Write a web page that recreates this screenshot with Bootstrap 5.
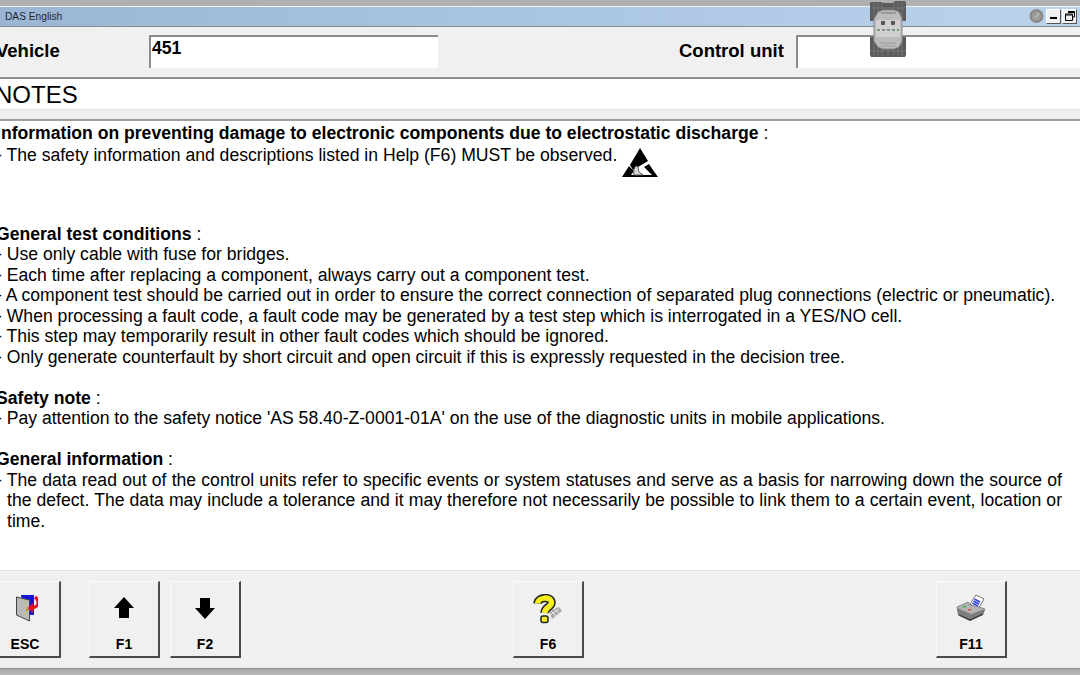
<!DOCTYPE html>
<html lang="en">
<head>
<meta charset="utf-8">
<title>DAS English</title>
<link href="https://cdn.jsdelivr.net/npm/bootstrap@5.3.0/dist/css/bootstrap.min.css" rel="stylesheet">
<style>
html,body{height:675px;overflow:hidden;background:#fff}
body{font-family:"Liberation Sans",Arial,sans-serif;color:#000}
.das-shell{width:1080px;height:675px;overflow:hidden;position:relative}
.das-top{height:7px;background:#b0b0b0;border-bottom:1px solid #f2f2f2}
.das-title{height:20px;background:linear-gradient(90deg,#9bb6d4,#bad4ee);border-bottom:1px solid #8a8a8a;font-size:10.2px;color:#1c2530;padding-left:5px}
.das-head{height:52px;background:#f0f0f0;border-bottom:2px solid #8c8c8c;padding-top:8px}
.das-label{font-size:18.5px;font-weight:700;line-height:20px;white-space:nowrap;flex:none;padding-top:6px}
.das-veh{width:149px;margin-left:-4px;margin-right:4px}
.das-ctl{margin-left:241px}
.das-field{background:#fff;border-top:2px solid #8c8c8c;border-left:2px solid #8c8c8c;height:33px;font-size:17.6px;font-weight:700;line-height:20px;padding:1px 0 0 1px;flex:none}
.das-field-a{width:289px}
.das-field-b{width:300px;margin-left:12px}
.das-notes{height:31px;background:#fff;border-bottom:1px solid #e3e3e3;font-size:24px;line-height:31px;white-space:nowrap}
.das-notes span{display:block;margin-left:-5px}
.das-strip{height:11px;background:#f0f0f0;border-bottom:2px solid #a0a0a0}
.das-body{height:449px;font-size:17.6px;line-height:20.5px;overflow:hidden;padding-top:2px}
.das-body p{margin:0 0 0 -4px;width:1066px}
.das-line{height:20.5px;white-space:nowrap}
.das-esd-line{height:22px;padding-top:1px;white-space:nowrap}
.das-just{text-align:justify;padding-left:11px;text-indent:-11px}
.das-gap-a{height:58px}
.das-gap-b{height:20.5px}
.das-esd{position:relative;margin-left:5px;vertical-align:-17px}
.das-foot{height:98px;background:#f0f0f0;border-top:1px solid #e2e2e2;padding-top:10px}
.das-key{width:71px;height:77px;background:#f0f0f0;border:0;border-top:1px solid #fbfbfb;border-left:1px solid #fbfbfb;border-right:2px solid #4a4a4a;border-bottom:2px solid #4a4a4a;border-radius:0;padding:0;font-size:14px;font-weight:700;color:#000;flex:none;display:flex;flex-direction:column;align-items:center}
.das-key svg{margin-top:12px;height:30px;flex:none}
.das-key span{margin-top:12px;line-height:16px}
.das-k-esc{margin-left:-10px}
.das-k-f1{margin-left:28px}
.das-k-f2{margin-left:10px}
.das-k-f6{margin-left:272px}
.das-k-f11{margin-left:352px}
.das-bottom{height:7px;background:linear-gradient(180deg,#a8a8a8,#bcbcbc);border-top:1px solid #8f8f8f}
.das-device{position:absolute;left:869px;top:1px}
.das-winbtn{width:15px;height:15px;background:#f0f0f0;border:1px solid #9a9a9a;border-top-color:#fff;border-left-color:#fff;border-right-color:#555;border-bottom-color:#555;margin-left:1px;flex:none}
.das-winctl{position:absolute;left:1029px;top:8px}
</style>
</head>
<body>
<div class="das-shell">
  <div class="das-top"></div>
  <div class="das-title d-flex align-items-center">DAS English</div>
  <div class="das-head d-flex align-items-start">
    <div class="das-label das-veh">Vehicle</div>
    <div class="das-field das-field-a">451</div>
    <div class="das-label das-ctl">Control unit</div>
    <div class="das-field das-field-b"></div>
  </div>
  <div class="das-notes"><span>NOTES</span></div>
  <div class="das-strip"></div>
  <div class="das-body">
    <p class="das-line"><b>Information on preventing damage to electronic components due to electrostatic discharge</b> :</p>
    <p class="das-esd-line">- The safety information and descriptions listed in Help (F6) MUST be observed.<svg class="das-esd" width="36" height="30" viewBox="0 0 36 30"><path d="M18 0 L26 13 L11 22 L8 17 Z" fill="#000"/><path d="M7 18 L0 29 H36 L31 22 L27 16 L22 19 L30 27 H9 L12 23 Z" fill="#000"/><path d="M12 27 C11 21 13 18 15 18 C17 19 16 22 17 24 L21 27 Z" fill="#d8d8d8" stroke="#555" stroke-width="1"/></svg></p>
    <div class="das-gap-a"></div>
    <p class="das-line"><b>General test conditions</b> :</p>
    <p class="das-line">- Use only cable with fuse for bridges.</p>
    <p class="das-line">- Each time after replacing a component, always carry out a component test.</p>
    <p class="das-line">- A component test should be carried out in order to ensure the correct connection of separated plug connections (electric or pneumatic).</p>
    <p class="das-line">- When processing a fault code, a fault code may be generated by a test step which is interrogated in a YES/NO cell.</p>
    <p class="das-line">- This step may temporarily result in other fault codes which should be ignored.</p>
    <p class="das-line">- Only generate counterfault by short circuit and open circuit if this is expressly requested in the decision tree.</p>
    <div class="das-gap-b"></div>
    <p class="das-line"><b>Safety note</b> :</p>
    <p class="das-line">- Pay attention to the safety notice 'AS 58.40-Z-0001-01A' on the use of the diagnostic units in mobile applications.</p>
    <div class="das-gap-b"></div>
    <p class="das-line"><b>General information</b> :</p>
    <p class="das-just">- The data read out of the control units refer to specific events or system statuses and serve as a basis for narrowing down the source of the defect. The data may include a tolerance and it may therefore not necessarily be possible to link them to a certain event, location or time.</p>
  </div>
  <div class="das-foot d-flex align-items-start">
    <button type="button" class="btn das-key das-k-esc"><svg width="26" height="30" viewBox="0 0 26 30"><path d="M9 1 H22 V21 H12 Z" fill="#1414d8"/><path d="M4.5 3 L17.5 6 V27 L4.5 21 Z" fill="#b9b9b9" stroke="#444" stroke-width="1"/><rect x="14" y="15" width="2" height="2" fill="#b89000"/><path d="M23 3 C28 7 27 13 20 14" fill="none" stroke="#e80f16" stroke-width="3"/><path d="M21 9 L21 19 L15.5 14 Z" fill="#e80f16"/></svg><span>ESC</span></button>
    <button type="button" class="btn das-key das-k-f1"><svg width="22" height="30" viewBox="0 0 22 30"><path d="M11 3 L21 14 H16 V24 H6 V14 H1 Z" fill="#000"/></svg><span>F1</span></button>
    <button type="button" class="btn das-key das-k-f2"><svg width="22" height="30" viewBox="0 0 22 30"><path d="M6 4 H16 V14 H21 L11 25 L1 14 H6 Z" fill="#000"/></svg><span>F2</span></button>
    <button type="button" class="btn das-key das-k-f6"><svg width="30" height="30" viewBox="0 0 30 30"><path d="M16 17 L26 13 L29 17 L19 25 Z" fill="#a8a8a8"/><path d="M18 17 L24 23 M21 15 L27 20 M17 21 L26 15" stroke="#e8e8e8" stroke-width="1"/><path d="M4.5 9.5 C5 3 18 2 18.5 8.5 C18.5 13 12 13 11.5 19" fill="none" stroke="#222" stroke-width="8.5"/><path d="M4.5 9.5 C5 3 18 2 18.5 8.5 C18.5 13 12 13 11.5 19" fill="none" stroke="#f6ee1d" stroke-width="5.5"/><rect x="8" y="22" width="7" height="6.5" rx="2" fill="#f6ee1d" stroke="#222" stroke-width="1.5"/></svg><span>F6</span></button>
    <button type="button" class="btn das-key das-k-f11"><svg width="30" height="30" viewBox="0 0 30 30"><path d="M14 10 L20 1 L28 5 L22 15 Z" fill="#fff" stroke="#555" stroke-width=".8"/><path d="M18.5 5 L24 8 M17.5 7 L23 10 M16.5 9 L22 12" stroke="#2a3fe0" stroke-width="1.5"/><path d="M1 13 L12 8 L14 11 L23 13 L29 15 L26 21 L14 24 L2 18 Z" fill="#b4b4b4" stroke="#777" stroke-width=".8"/><path d="M1 14 L2 21 L14 27 L27 21 L29 15 L15 20 Z" fill="#7d7d7d"/><path d="M3 21 L14 26 L27 20" stroke="#333" stroke-width="1.2" fill="none"/><rect x="7" y="12" width="3" height="1.5" fill="#3bb54a"/><rect x="12" y="15" width="3" height="1.5" fill="#d84a4a"/></svg><span>F11</span></button>
  </div>
  <div class="das-bottom"></div>

  <svg class="das-device" width="38" height="56" viewBox="0 0 38 56">
    <path d="M1 2 L2 1 H12 L14 2 H24 L26 0 H36 L37 2 V20 H1 Z" fill="#5a5a5a"/>
    <path d="M1 36 H37 V54 L36 56 H2 L1 54 Z" fill="#5a5a5a"/>
    <path d="M5 1 V20 M9 1 V20 M13 1 V12 M25 1 V12 M29 1 V20 M33 1 V20 M5 36 V56 M9 36 V56 M29 36 V56 M33 36 V56 M13 48 V56 M19 48 V56 M25 48 V56 M1 7 H37 M1 50 H37" stroke="#777" stroke-width="1"/>
    <path d="M9 11 L14 9 H25 L30 11 L33 18 V40 L30 46 L25 48 H14 L9 46 L5 40 V18 Z" fill="#bcbcbc" stroke="#8a8a8a"/>
    <path d="M12 12 H27" stroke="#8f8f8f" stroke-width="1.5"/>
    <rect x="7" y="19" width="24" height="17" fill="#d0d0d0"/>
    <rect x="12" y="20" width="4" height="4" rx="1" fill="#555"/>
    <rect x="22" y="20" width="4" height="4" rx="1" fill="#555"/>
    <path d="M8 29 H30" stroke="#7f957f" stroke-width="2" stroke-dasharray="3 2"/>
    <path d="M11 42 H27 M12 45 H26" stroke="#9a9a9a"/>
  </svg>
  <div class="das-winctl d-flex align-items-center">
    <svg width="16" height="16" viewBox="0 0 16 16"><circle cx="7.5" cy="8" r="7" fill="#8a8a8a"/><circle cx="7.5" cy="8" r="4.5" fill="#9c9c9c"/><path d="M6 10 L10 5" stroke="#b8b8b8" stroke-width="1.5"/></svg>
    <div class="das-winbtn d-flex align-items-end justify-content-center pb-1"><svg width="7" height="2" viewBox="0 0 7 2"><rect width="7" height="2" fill="#000"/></svg></div>
    <div class="das-winbtn d-flex align-items-center justify-content-center"><svg width="10" height="10" viewBox="0 0 10 10"><path d="M3 .5 H9.5 V6 H7.5 M.5 3 H7.5 V9.5 H.5 Z M3 1.5 H9.5 M.5 4 H7.5" fill="none" stroke="#000"/></svg></div>
  </div>
</div>
<script src="https://cdn.jsdelivr.net/npm/bootstrap@5.3.0/dist/js/bootstrap.bundle.min.js"></script>
</body>
</html>
